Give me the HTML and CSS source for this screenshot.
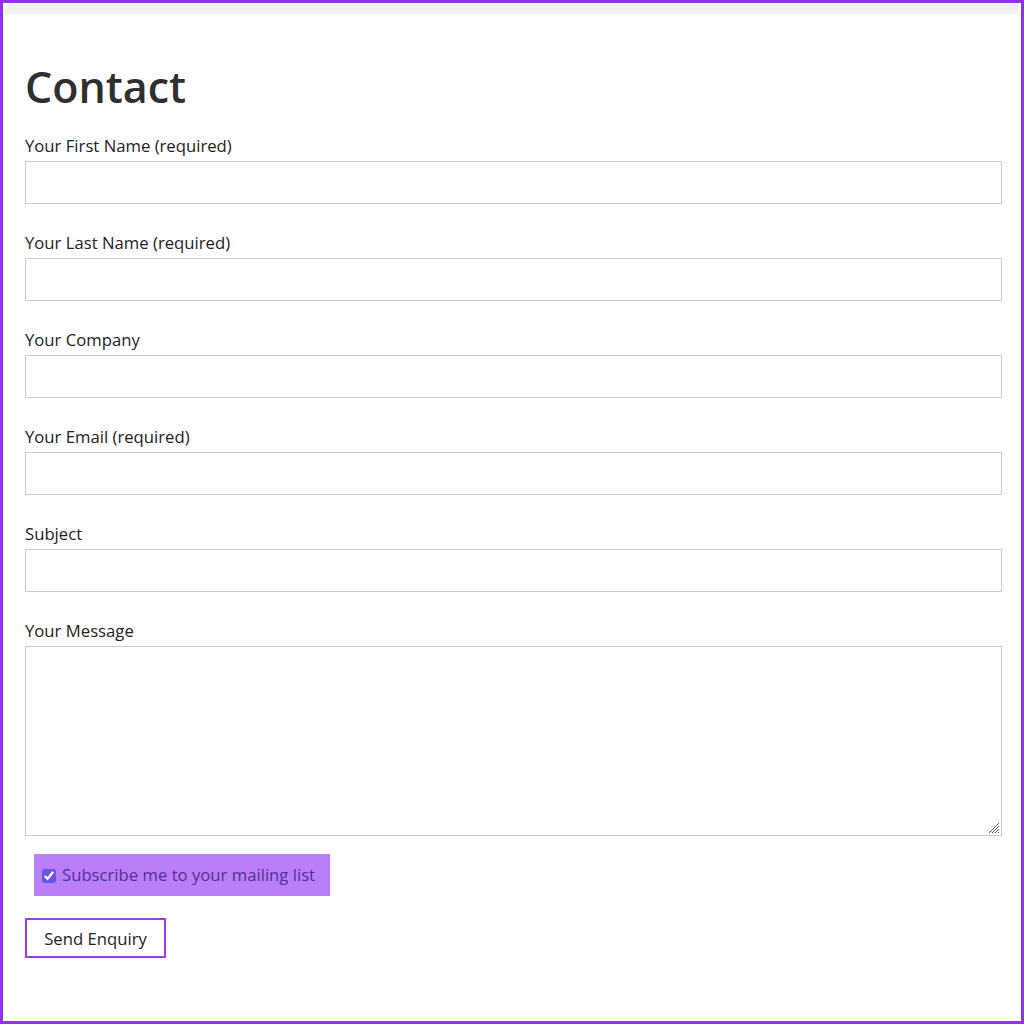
FILE: index.html
```html
<!DOCTYPE html>
<html lang="en">
<head>
<meta charset="utf-8">
<title>Contact</title>
<link rel="stylesheet" href="styles.css">
</head>
<body>
<div class="frame">
  <div class="topbar"></div>
  <main class="content">
    <h1 class="title">Contact</h1>
    <form class="form">
      <div class="field">
        <label class="label" for="f1">Your First Name (required)</label>
        <input class="input" id="f1" type="text">
      </div>
      <div class="field">
        <label class="label" for="f2">Your Last Name (required)</label>
        <input class="input" id="f2" type="text">
      </div>
      <div class="field">
        <label class="label" for="f3">Your Company</label>
        <input class="input" id="f3" type="text">
      </div>
      <div class="field">
        <label class="label" for="f4">Your Email (required)</label>
        <input class="input" id="f4" type="email">
      </div>
      <div class="field">
        <label class="label" for="f5">Subject</label>
        <input class="input" id="f5" type="text">
      </div>
      <div class="field field-message">
        <label class="label" for="f6">Your Message</label>
        <div class="textarea-wrap">
          <textarea class="textarea" id="f6"></textarea>
          <svg class="grip" width="14" height="14" viewBox="0 0 14 14" aria-hidden="true">
            <path d="M13 3 L3 13 M13 6 L6 13 M13 9 L9 13 M13 12 L12 13" stroke="#555" stroke-width="1" fill="none"/>
          </svg>
        </div>
      </div>
      <label class="subscribe">
        <input class="check" type="checkbox" checked>
        <span>Subscribe me to your mailing list</span>
      </label>
      <button class="send" type="button">Send Enquiry</button>
    </form>
  </main>
</div>
</body>
</html>
```
FILE: styles.css
```css
html, body {
  margin: 0;
  padding: 0;
  background: #ffffff;
}

.frame {
  width: 1024px;
  height: 1024px;
  box-sizing: border-box;
  border: 3px solid #9131f2;
  background: #ffffff;
  font-family: "Open Sans", "Noto Sans", sans-serif;
  color: #2b2b2b;
}

.topbar {
  height: 10px;
  margin: 1px 3px 0 2px;
  background: #f2f2f2;
}

.content {
  padding: 0 19px 0 22px;
}

.title {
  margin: 48px 0 0;
  font-size: 43px;
  line-height: 50px;
  font-weight: 600;
  color: #2f2f2f;
}

.form {
  margin-top: 22px;
}

.field {
  display: flex;
  flex-direction: column;
  margin-bottom: 27px;
}

.field-message {
  margin-bottom: 18px;
}

.label {
  font-size: 16.7px;
  line-height: 24px;
  margin-bottom: 3px;
  color: #222222;
}

.input {
  box-sizing: border-box;
  height: 43px;
  width: 100%;
  margin: 0;
  border: 1px solid #cccccc;
  border-radius: 0;
  background: #ffffff;
  font-family: inherit;
  font-size: 16px;
  padding: 0 10px;
}

.textarea-wrap {
  position: relative;
  height: 190px;
}

.textarea {
  display: block;
  box-sizing: border-box;
  height: 190px;
  width: 100%;
  margin: 0;
  border: 1px solid #cccccc;
  border-radius: 0;
  background: #ffffff;
  font-family: inherit;
  font-size: 16px;
  padding: 8px 10px;
  resize: none;
}

.grip {
  position: absolute;
  right: 2px;
  bottom: 2px;
}

.subscribe {
  display: inline-flex;
  align-items: center;
  height: 42px;
  margin-left: 9px;
  padding: 0 15px 0 8px;
  background: #b97ff8;
  color: #5a2c96;
  font-size: 16.7px;
  line-height: 24px;
}

.check {
  width: 14px;
  height: 14px;
  margin: 1px 6px 0 0;
  accent-color: #6a55e8;
}

.send {
  display: block;
  margin-top: 22px;
  width: 141px;
  height: 40px;
  box-sizing: border-box;
  background: #ffffff;
  border: 2px solid #9b3cf2;
  border-radius: 0;
  font-family: inherit;
  font-size: 16.7px;
  color: #222222;
  padding: 0;
}
```
